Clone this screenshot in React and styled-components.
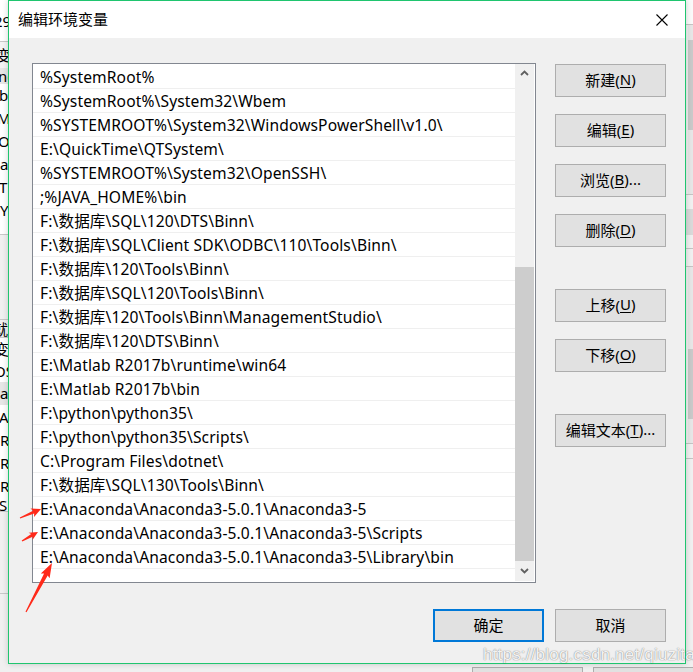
import React from "react";
import styled, { createGlobalStyle } from "styled-components";

const GlobalStyle = createGlobalStyle`
  html, body { margin: 0; padding: 0; background: #f0f0f0; }
  * { box-sizing: border-box; }
  body { font-family: "Noto Sans", "Noto Sans CJK SC", sans-serif; }
`;

const FONT = `"Noto Sans", "Noto Sans CJK SC", sans-serif`;

const Screen = styled.div`
  position: relative;
  width: 693px;
  height: 672px;
  overflow: hidden;
  background: #f0f0f0;
  font-family: ${FONT};
`;

/* ---------- background windows peeking around the dialog ---------- */
const LeftStrip = styled.div`
  position: absolute;
  left: 0;
  top: 0;
  width: 8px;
  height: 672px;
  display: flex;
  flex-direction: column;
  overflow: hidden;
  background: #f0f0f0;
`;

const StripCell = styled.div`
  height: ${(p) => p.$h}px;
  flex: none;
  background: ${(p) => p.$bg || "#fff"};
  border-bottom: ${(p) => (p.$line ? "1px solid #c8c8c8" : "none")};
  font-size: 15px;
  line-height: ${(p) => p.$h}px;
  white-space: nowrap;
  color: #000;
  text-indent: ${(p) => p.$indent || 0}px;
  overflow: hidden;
`;

const RightStrip = styled.div`
  position: absolute;
  left: 686px;
  top: 0;
  width: 7px;
  height: 664px;
  display: flex;
  flex-direction: column;
  background: #f0f0f0;
`;

const RightCell = styled.div`
  height: ${(p) => p.$h}px;
  flex: none;
  background: ${(p) => p.$bg || "#f0f0f0"};
  border-bottom: ${(p) => (p.$line ? "1px solid #c4c4c4" : "none")};
  display: flex;
  justify-content: flex-end;
`;

const RightScroll = styled.div`
  width: 5px;
  height: 100%;
  background: #e6e6e6;
  display: flex;
  flex-direction: column;
  padding-top: ${(p) => p.$top}px;
`;

const RightThumb = styled.div`
  height: ${(p) => p.$h}px;
  background: #c9c9c9;
`;

const BottomStrip = styled.div`
  position: absolute;
  left: 0;
  top: 664px;
  width: 693px;
  height: 8px;
  display: flex;
  padding: 3px 0 0 472px;
  gap: 10px;
  background: #f0f0f0;
`;

const GhostButton = styled.div`
  width: ${(p) => p.$w}px;
  height: 20px;
  flex: none;
  background: #e1e1e1;
  border: 1px solid #adadad;
`;

/* ---------- the dialog ---------- */
const Dialog = styled.div`
  position: absolute;
  left: 8px;
  top: 0;
  width: 678px;
  height: 664px;
  border: 1px solid #1fc56f;
  background: #f0f0f0;
  display: flex;
  flex-direction: column;
  box-shadow: 0 0 6px rgba(0, 0, 0, 0.18);
`;

const TitleBar = styled.div`
  height: 37px;
  flex: none;
  background: #fff;
  display: flex;
  align-items: center;
  justify-content: space-between;
  padding-left: 9px;
`;

const Title = styled.div`
  font-family: "Noto Sans CJK SC", sans-serif;
  font-size: 15px;
  color: #000;
  margin-bottom: 2px;
`;

const CloseButton = styled.div`
  width: 46px;
  height: 37px;
  display: flex;
  align-items: center;
  justify-content: center;
`;

const Body = styled.div`
  flex: 1;
  display: flex;
  flex-direction: column;
  padding: 25px 19px 21px 23px;
`;

const Main = styled.div`
  display: flex;
  gap: 19px;
  align-items: flex-start;
`;

const ListBox = styled.div`
  width: 504px;
  height: 520px;
  flex: none;
  border: 1px solid #828790;
  background: #fff;
  display: flex;
  padding: 0 1px 1px 0;
`;

const Rows = styled.div`
  flex: 1;
  display: flex;
  flex-direction: column;
  padding-top: 1px;
  overflow: hidden;
`;

const Row = styled.div`
  height: 24px;
  flex: none;
  border-bottom: 1px solid #efefef;
  padding: 1px 0 0 7px;
  line-height: 22px;
  font-size: 15.6px;
  letter-spacing: 0.12px;
  color: #000;
  white-space: nowrap;
`;

const ScrollBar = styled.div`
  width: 19px;
  flex: none;
  background: #f0f0f0;
  display: flex;
  flex-direction: column;
`;

const ScrollArrow = styled.div`
  height: ${(p) => p.$h}px;
  flex: none;
  display: flex;
  align-items: center;
  justify-content: center;
`;

const Track = styled.div`
  flex: 1;
  display: flex;
  flex-direction: column;
`;

const Thumb = styled.div`
  margin-top: ${(p) => p.$offset}px;
  flex: 1;
  background: #cdcdcd;
`;

const ButtonColumn = styled.div`
  display: flex;
  flex-direction: column;
  padding-top: 1px;
`;

const Button = styled.div`
  width: 111px;
  height: 33px;
  flex: none;
  margin-top: ${(p) => p.$mt || 0}px;
  background: #e1e1e1;
  border: ${(p) => (p.$primary ? "2px solid #0078d7" : "1px solid #adadad")};
  display: flex;
  align-items: center;
  justify-content: center;
  padding-bottom: 3px;
  font-size: 15px;
  color: #000;
  font-family: ${FONT};
  u { text-decoration: underline; text-underline-offset: 2px; }
`;

const Footer = styled.div`
  display: flex;
  justify-content: flex-end;
  gap: 11px;
  margin-top: 26px;
`;

/* ---------- overlays ---------- */
const Annotation = styled.svg`
  position: absolute;
  left: 0;
  top: 0;
  pointer-events: none;
`;

const Watermark = styled.div`
  position: absolute;
  left: 483px;
  top: 645px;
  font-family: "Liberation Sans", "Noto Sans", sans-serif;
  font-size: 17px;
  letter-spacing: 0.2px;
  color: rgba(255, 255, 255, 0.92);
  text-shadow: 0 0 1px rgba(0, 0, 0, 0.5), 0 0 2px rgba(0, 0, 0, 0.15);
  white-space: nowrap;
`;

const rows = [
  "%SystemRoot%",
  "%SystemRoot%\\System32\\Wbem",
  "%SYSTEMROOT%\\System32\\WindowsPowerShell\\v1.0\\",
  "E:\\QuickTime\\QTSystem\\",
  "%SYSTEMROOT%\\System32\\OpenSSH\\",
  ";%JAVA_HOME%\\bin",
  "F:\\数据库\\SQL\\120\\DTS\\Binn\\",
  "F:\\数据库\\SQL\\Client SDK\\ODBC\\110\\Tools\\Binn\\",
  "F:\\数据库\\120\\Tools\\Binn\\",
  "F:\\数据库\\SQL\\120\\Tools\\Binn\\",
  "F:\\数据库\\120\\Tools\\Binn\\ManagementStudio\\",
  "F:\\数据库\\120\\DTS\\Binn\\",
  "E:\\Matlab R2017b\\runtime\\win64",
  "E:\\Matlab R2017b\\bin",
  "F:\\python\\python35\\",
  "F:\\python\\python35\\Scripts\\",
  "C:\\Program Files\\dotnet\\",
  "F:\\数据库\\SQL\\130\\Tools\\Binn\\",
  "E:\\Anaconda\\Anaconda3-5.0.1\\Anaconda3-5",
  "E:\\Anaconda\\Anaconda3-5.0.1\\Anaconda3-5\\Scripts",
  "E:\\Anaconda\\Anaconda3-5.0.1\\Anaconda3-5\\Library\\bin",
];

const leftCells = [
  { h: 42, text: "29", indent: -6, line: true },
  { h: 26, text: "变", indent: -4, bg: "#f4f4f4" },
  { h: 16, text: "nd", indent: -2, bg: "#e6e6e6" },
  { h: 23, text: "b", indent: -1 },
  { h: 23, text: "MS", indent: -3 },
  { h: 23, text: "Or", indent: -2 },
  { h: 23, text: "a", indent: 0 },
  { h: 23, text: "T", indent: -1 },
  { h: 23, text: "Y", indent: 0 },
  { h: 13, text: "", line: true },
  { h: 85, text: "", bg: "#f0f0f0", line: true },
  { h: 18, text: "就", indent: -7, bg: "#f0f0f0", line: true },
  { h: 22, text: "变", indent: -6 },
  { h: 22, text: "OS", indent: -6 },
  { h: 23, text: "a", indent: 0, bg: "#e6e6e6" },
  { h: 24, text: "A", indent: -1 },
  { h: 23, text: "R", indent: 0 },
  { h: 23, text: "R", indent: 0 },
  { h: 23, text: "R", indent: 0 },
  { h: 14, text: "S", indent: -1, line: true },
  { h: 82, text: "", bg: "#f0f0f0", line: true },
  { h: 30, text: "", bg: "#f0f0f0" },
];

function arrowPoints(tx, ty, px, py, shaft, head, headLen) {
  const dx = px - tx;
  const dy = py - ty;
  const L = Math.hypot(dx, dy);
  const ux = dx / L;
  const uy = dy / L;
  const nx = -uy;
  const ny = ux;
  const bx = px - ux * headLen;
  const by = py - uy * headLen;
  const pts = [
    [tx + nx * 0.6, ty + ny * 0.6],
    [bx + nx * shaft * 0.5, by + ny * shaft * 0.5],
    [bx - ux * 1.5 + nx * head * 0.5, by - uy * 1.5 + ny * head * 0.5],
    [px, py],
    [bx - ux * 1.5 - nx * head * 0.5, by - uy * 1.5 - ny * head * 0.5],
    [bx - nx * shaft * 0.5, by - ny * shaft * 0.5],
    [tx - nx * 0.6, ty - ny * 0.6],
  ];
  return pts.map((p) => p.map((v) => v.toFixed(1)).join(",")).join(" ");
}

const Chevron = ({ up }) => (
  <svg width="9" height="6" viewBox="0 0 9 6">
    <path
      d={up ? "M1 5 L4.5 1.5 L8 5" : "M1 1 L4.5 4.5 L8 1"}
      fill="none"
      stroke="#606060"
      strokeWidth="1.8"
    />
  </svg>
);

export default function App() {
  return (
    <Screen>
      <GlobalStyle />

      <LeftStrip>
        {leftCells.map((c, i) => (
          <StripCell key={i} $h={c.h} $bg={c.bg} $line={c.line} $indent={c.indent}>
            {c.text}
          </StripCell>
        ))}
      </LeftStrip>

      <RightStrip>
        <RightCell $h={25} $bg="#fafafa" $line />
        <RightCell $h={170} $line>
          <RightScroll $top={15}>
            <RightThumb $h={90} />
          </RightScroll>
        </RightCell>
        <RightCell $h={14} />
        <RightCell $h={26} $bg="#d9d9d9" />
        <RightCell $h={14} $line />
        <RightCell $h={18} $line />
        <RightCell $h={177} $line>
          <RightScroll $top={82}>
            <RightThumb $h={70} />
          </RightScroll>
        </RightCell>
        <RightCell $h={15} $line />
        <RightCell $h={185} />
      </RightStrip>

      <BottomStrip>
        <GhostButton $w={111} />
        <GhostButton $w={111} />
      </BottomStrip>

      <Dialog>
        <TitleBar>
          <Title>编辑环境变量</Title>
          <CloseButton>
            <svg width="12" height="12" viewBox="0 0 12 12">
              <path d="M0.5 0.5 L11.5 11.5 M11.5 0.5 L0.5 11.5" stroke="#000" strokeWidth="1.1" />
            </svg>
          </CloseButton>
        </TitleBar>

        <Body>
          <Main>
            <ListBox>
              <Rows>
                {rows.map((r, i) => (
                  <Row key={i}>{r}</Row>
                ))}
              </Rows>
              <ScrollBar>
                <ScrollArrow $h={17}>
                  <Chevron up />
                </ScrollArrow>
                <Track>
                  <Thumb $offset={186} />
                </Track>
                <ScrollArrow $h={20}>
                  <Chevron />
                </ScrollArrow>
              </ScrollBar>
            </ListBox>

            <ButtonColumn>
              <Button>新建(<u>N</u>)</Button>
              <Button $mt={17}>编辑(<u>E</u>)</Button>
              <Button $mt={17}>浏览(<u>B</u>)...</Button>
              <Button $mt={17}>删除(<u>D</u>)</Button>
              <Button $mt={42}>上移(<u>U</u>)</Button>
              <Button $mt={17}>下移(<u>O</u>)</Button>
              <Button $mt={42}>编辑文本(<u>T</u>)...</Button>
            </ButtonColumn>
          </Main>

          <Footer>
            <Button $primary>确定</Button>
            <Button>取消</Button>
          </Footer>
        </Body>
      </Dialog>

      <Annotation width="693" height="672" viewBox="0 0 693 672">
        <polygon points={arrowPoints(20, 518, 41, 509, 3, 9, 8)} fill="#ff2a1a" />
        <polygon points={arrowPoints(22, 541, 38, 532, 3, 8, 7)} fill="#ff2a1a" />
        <polygon points={arrowPoints(26, 612, 52, 563, 4, 10, 13)} fill="#ff2a1a" />
      </Annotation>

      <Watermark>https://blog.csdn.net/qiuzitao</Watermark>
    </Screen>
  );
}
